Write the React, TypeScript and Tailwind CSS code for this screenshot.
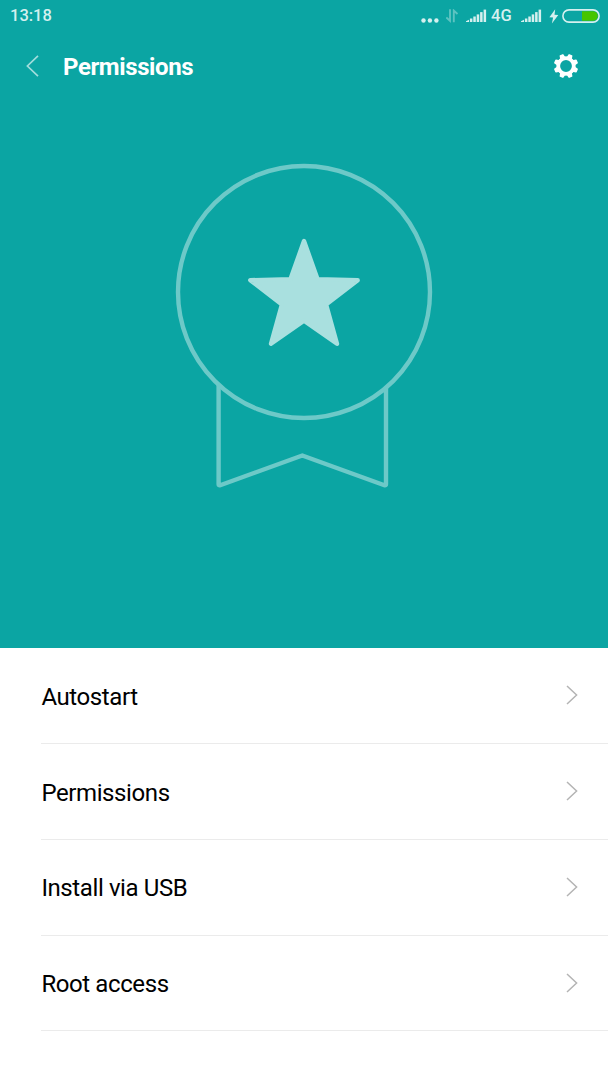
import React from 'react';

interface PermissionItem {
  id: string;
  label: string;
}

const ITEMS: PermissionItem[] = [
  { id: 'autostart', label: 'Autostart' },
  { id: 'permissions', label: 'Permissions' },
  { id: 'usb', label: 'Install via USB' },
  { id: 'root', label: 'Root access' },
];

const SignalBars: React.FC = () => (
  <svg width="22" height="14" viewBox="0 0 22 14" fill="currentColor">
    <path d="M0 13V12.2L3 10.8V13Z" />
    <rect x="3.9" y="9.5" width="2.5" height="3.5" />
    <rect x="7.3" y="7.5" width="2.5" height="5.5" />
    <rect x="10.7" y="5.4" width="2.5" height="7.6" />
    <rect x="14.1" y="3.1" width="2.5" height="9.9" />
    <rect x="17.6" y="0.6" width="2.5" height="12.4" />
  </svg>
);

const StatusBar: React.FC = () => (
  <div className="flex h-8 items-center pl-[10px] text-[#d5f0ef]">
    <span className="text-[16.5px] leading-8 font-medium">13:18</span>
    <div className="ml-auto flex h-8 items-center">
      <svg className="mt-[9px]" width="18" height="5" viewBox="0 0 18 5" fill="currentColor">
        <circle cx="2.5" cy="2.5" r="2.2" />
        <circle cx="8.9" cy="2.5" r="2.2" />
        <circle cx="15.4" cy="2.5" r="2.2" />
      </svg>
      {/* Data transfer arrows */}
      <svg className="ml-[7px] opacity-40" width="14" height="14" viewBox="0 0 14 14" fill="none" stroke="currentColor" strokeWidth="1.9">
        <path d="M4 0.2V11.8L0.3 8.4M7.8 13.2V1.6L11.5 5" />
      </svg>
      <div className="ml-[6px]">
        <SignalBars />
      </div>
      <span className="ml-[3px] w-[30px] text-[16.5px] leading-8 font-medium">4G</span>
      <SignalBars />
      <svg className="ml-[6px]" width="10" height="15" viewBox="0 0 10 15" fill="currentColor">
        <path d="M6.2 0.3L0.4 8.2L4.1 8.6L2.9 14.6L9.3 6.1L5.5 5.7Z" />
      </svg>
      <svg className="mr-2 ml-[3px]" width="38" height="14" viewBox="0 0 38 14">
        <path d="M20 2.2H31A4.8 4.8 0 0 1 31 11.8H20Z" fill="#46c500" />
        <rect x="0.9" y="0.9" width="36.2" height="12.2" rx="6.1" fill="none" stroke="currentColor" strokeWidth="1.6" />
      </svg>
    </div>
  </div>
);

const GEAR_TEETH = [22.5, 67.5, 112.5, 157.5, 202.5, 247.5, 292.5, 337.5];

const GearIcon: React.FC = () => (
  <svg width="24" height="24" viewBox="0 0 24 24">
    <circle cx="12" cy="12" r="7.8" fill="none" stroke="white" strokeWidth="3.8" />
    {GEAR_TEETH.map((angle) => (
      <path
        key={angle}
        d="M9.1 4.2L9.9 0.4Q10 -0.2 10.6 -0.2H13.4Q14 -0.2 14.1 0.4L14.9 4.2Z"
        fill="white"
        transform={`rotate(${angle} 12 12)`}
      />
    ))}
  </svg>
);

const Medal: React.FC = () => (
  <svg className="mx-auto mt-[62px]" width="258" height="328" viewBox="175 162 258 328">
    <g fill="none" stroke="#6dc9c8" strokeWidth="4.4" strokeLinejoin="round">
      <circle cx="304" cy="292" r="126" />
      <path d="M218.6 385V484.2Q218.6 485.8 220.2 485.2L302.3 455.5L384.4 485.2Q386 485.8 386 484.2V387" />
    </g>
    <path
      d="M304 241L317.5 279.1L357.7 280.2L326.1 304.5L337 343.8L304 320.6L271 343.8L281.9 304.5L250.3 280.2L290.5 279.1Z"
      fill="#a9e0df"
      stroke="#a9e0df"
      strokeWidth="4.4"
      strokeLinejoin="round"
    />
  </svg>
);

const App: React.FC = () => {
  return (
    <div className="min-h-[1080px] w-full bg-white font-['Roboto',sans-serif]">
      <div className="h-[648px] bg-[#0ba5a3]">
        <StatusBar />
        <header className="flex h-[68px] items-center pr-[30px] pl-[26px] text-white">
          <button aria-label="Back">
            <svg className="block" width="13" height="22" viewBox="0 0 13 22" fill="none" stroke="#a2dddc" strokeWidth="1.7">
              <path d="M12 0.9L1.4 11L12 21.1" />
            </svg>
          </button>
          <h1 className="mt-[2px] ml-6 text-2xl font-bold tracking-[-0.4px]">Permissions</h1>
          <button className="ml-auto" aria-label="Settings">
            <GearIcon />
          </button>
        </header>
        <Medal />
      </div>

      <ul className="pl-[41px]">
        {ITEMS.map((item) => (
          <li
            key={item.id}
            className="flex h-[95.85px] items-center justify-between border-b border-[#ebebeb] pr-[30px]"
          >
            <span className="mt-[2.5px] pl-[0.4px] text-2xl tracking-[-0.4px] text-black">{item.label}</span>
            <svg width="12" height="20" viewBox="0 0 12 20" fill="none" stroke="#b4b4b4" strokeWidth="1.5">
              <path d="M1 1L10.6 10L1 19" />
            </svg>
          </li>
        ))}
      </ul>
    </div>
  );
};

export default App;
